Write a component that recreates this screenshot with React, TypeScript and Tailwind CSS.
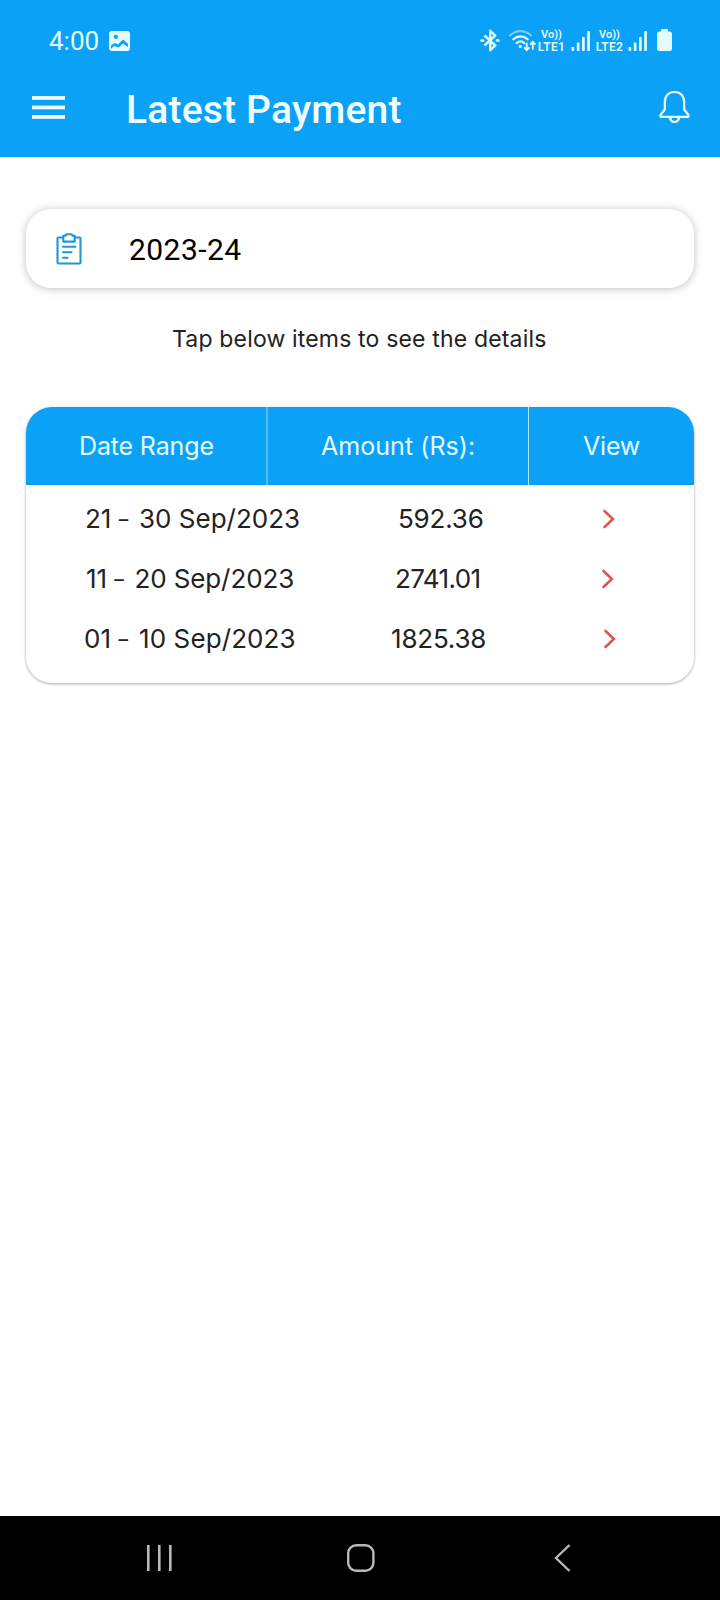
import React from "react";

type Payment = {
  days: [string, string];
  amount: string;
  rangeClass: string;
  amountClass: string;
};

const payments: Payment[] = [
  {
    days: ["21", "30 Sep/2023"],
    amount: "592.36",
    rangeClass: "ml-[59px] w-[313px]",
    amountClass: "w-[204px] tracking-[-0.2px]",
  },
  {
    days: ["11", "20 Sep/2023"],
    amount: "2741.01",
    rangeClass: "ml-[60px] w-[309px] tracking-[-0.1px]",
    amountClass: "w-[206px] tracking-[-0.6px]",
  },
  {
    days: ["01", "10 Sep/2023"],
    amount: "1825.38",
    rangeClass: "ml-[58px] w-[307px] tracking-[0.1px]",
    amountClass: "w-[212px] tracking-[-0.2px]",
  },
];

const SignalBars: React.FC = () => (
  <svg width="20" height="20" viewBox="0 0 20 20" fill="currentColor">
    <rect x="0.5" y="16" width="2.7" height="4" rx="0.8" />
    <rect x="5.8" y="11.5" width="2.7" height="8.5" rx="0.8" />
    <rect x="11" y="6" width="2.7" height="14" rx="0.8" />
    <rect x="16.2" y="0" width="2.7" height="20" rx="0.8" />
  </svg>
);

const LteLabel: React.FC<{ name: string }> = ({ name }) => (
  <div className="flex w-[27px] flex-col items-center font-[Roboto,sans-serif] leading-[12px] font-semibold whitespace-nowrap">
    <span className="text-[11px]">Vo))</span>
    <span className="text-[12px] leading-[13px] tracking-[0.3px]">{name}</span>
  </div>
);

const StatusBar: React.FC = () => (
  <div className="flex h-[60px] items-start text-[#e4fbff]">
    <span className="ml-[49px] mt-[26px] w-[60px] font-[Roboto,sans-serif] text-[26px] leading-[30px]">4:00</span>
    <svg className="mt-[31px]" width="21" height="20" viewBox="0 0 21 20">
      <rect width="21" height="20" rx="3" fill="currentColor" />
      <circle cx="6.8" cy="5.8" r="2.1" fill="#0aa1f6" />
      <path d="M2 14.500l4-2.500 3 1.500 5-5 5 4.500v3l-5-3.500-4.500 4-4-1.500L2 17.500z" fill="#0aa1f6" />
    </svg>
    <svg className="ml-[350px] mt-[29px]" width="20" height="23" viewBox="0 0 20 23" fill="none" stroke="currentColor" strokeWidth="2.4">
      <path d="M4.500 6.500l10.800 10-5 4.700V1.800l5 4.700-10.800 10" strokeLinejoin="round" />
      <path d="M1.400 11.500h1.800M16.800 11.500h1.800" strokeLinecap="round" />
    </svg>
    <svg className="ml-[8px] mt-[29px]" width="29" height="24" viewBox="0 0 29 24" fill="none" stroke="currentColor" strokeWidth="2.200" strokeLinecap="round">
      <path d="M2 6.500C8 0.600 17 0.600 23 6.500" opacity="0.5" />
      <path d="M5.300 10.300c4.200-3.900 10.200-3.900 14.400 0" />
      <path d="M8.700 14.100c2.300-2 5.300-2 7.600 0" />
      <circle cx="12.300" cy="17.500" r="1" fill="currentColor" strokeWidth="1.200" />
      <path d="M18.700 14.500v6.500M16.500 18.800l2.200 2.300 2.200-2.300M24.800 20v-6.500M22.600 15.200l2.200-2.300 2.200 2.300" strokeWidth="1.800" />
    </svg>
    <div className="ml-px mt-[29px]">
      <LteLabel name="LTE1" />
    </div>
    <div className="ml-[6px] mt-[31px]">
      <SignalBars />
    </div>
    <div className="ml-[5px] mt-[29px]">
      <LteLabel name="LTE2" />
    </div>
    <div className="ml-[5px] mt-[31px]">
      <SignalBars />
    </div>
    <svg className="ml-[9px] mt-[29px]" width="15" height="22" viewBox="0 0 15 22" fill="currentColor">
      <rect x="4" width="7" height="5" rx="1.200" />
      <rect y="2.500" width="15" height="19.500" rx="2.500" />
    </svg>
  </div>
);

const Header: React.FC = () => (
  <header className="h-[157px] bg-[#0aa1f6]">
    <StatusBar />
    <div className="flex h-[97px] items-start text-[#f0feff]">
      <button className="ml-[32px] mt-[36px]" aria-label="Menu">
        <svg width="33" height="24" viewBox="0 0 33 24" fill="currentColor">
          <rect y="0.100" width="33" height="3.700" />
          <rect y="9.600" width="33" height="3.700" />
          <rect y="19.100" width="33" height="3.700" />
        </svg>
      </button>
      <h1 className="ml-[61px] mt-[27px] font-[Roboto,sans-serif] text-[39px] leading-[46px] font-medium tracking-[0.2px]">
        Latest Payment
      </h1>
      <button className="mr-[30px] ml-auto mt-[30px]" aria-label="Notifications">
        <svg width="31" height="34" viewBox="0 0 31 34" fill="none" stroke="currentColor" strokeWidth="2.200" strokeLinejoin="round">
          <path d="M15.500 2C9.500 2 5.800 6.200 5.800 12v7.500L1.500 25v1.800h28v-1.800l-4.300-5.500V12c0-5.800-3.700-10-9.700-10z" />
          <path d="M11 27.500c.4 2.900 2 4.500 4.500 4.500s4.100-1.600 4.500-4.500" />
        </svg>
      </button>
    </div>
  </header>
);

const YearSelect: React.FC = () => (
  <div className="mx-[26px] mt-[52px] flex h-[79px] items-center rounded-[25px] bg-white shadow-[0_1px_8px_rgba(0,0,0,0.25)]">
    <svg className="ml-[30px]" width="26" height="32" viewBox="0 0 26 32" fill="none" stroke="#2196d3" strokeWidth="2.1" strokeLinejoin="round">
      <path d="M7 4.500H2.500a1 1 0 0 0-1 1v24a1 1 0 0 0 1 1h21a1 1 0 0 0 1-1v-24a1 1 0 0 0-1-1H19" />
      <path d="M7.300 8.600V2.800h2l1-1.500h5.400l1 1.500h2v5.800z" />
      <path d="M7 13.700h12.500M7 19.200h8.500M7 24.700h4.500" strokeLinecap="round" />
    </svg>
    <span className="ml-[47px] mt-[2px] font-[Roboto,sans-serif] text-[30px] leading-9 tracking-[0.45px] text-black">2023-24</span>
  </div>
);

const PaymentTable: React.FC = () => (
  <section className="mx-[26px] mt-[48px] h-[276px] overflow-hidden rounded-[26px] bg-white shadow-[0_1px_3px_rgba(0,0,0,0.35)]">
    <div className="flex h-[78px] bg-[#0aa1f6] text-[25px] text-[#e6fbff]">
      <div className="flex w-[242px] items-center border-r-2 border-[#55c0f8] pt-[2px] pl-[53px] tracking-[-0.15px]">Date Range</div>
      <div className="flex w-[261px] items-center border-r border-[#b5e6ff] pt-[2px] pl-[53px] tracking-[0.05px]">Amount (Rs):</div>
      <div className="flex flex-1 items-center pt-[2px] pl-[54px] tracking-[-0.2px]">View</div>
    </div>
    <div className="pt-[4px]">
      {payments.map(({ days, amount, rangeClass, amountClass }) => (
        <div key={amount} className="flex h-[60px] items-center text-[26px] whitespace-nowrap text-[#222]">
          <span className={`-mt-[2px] ${rangeClass}`}>
            {days[0]} <span className="inline-block w-[13px] -translate-y-[2px] text-[19px] font-medium">–</span> {days[1]}
          </span>
          <span className={`-mt-[2px] ${amountClass}`}>{amount}</span>
          <svg width="13" height="20" viewBox="0 0 13 20" fill="none" stroke="#d9594f" strokeWidth="2.600">
            <path d="M2.500 2l8.400 8-8.400 8" strokeLinecap="round" />
          </svg>
        </div>
      ))}
    </div>
  </section>
);

const NavBar: React.FC = () => (
  <nav className="mt-auto flex h-[84px] items-center bg-black text-[#b9b9b9]">
    <svg className="ml-[146px]" width="28" height="28" viewBox="0 0 28 28" stroke="currentColor" strokeWidth="2.600">
      <path d="M2.300 1v26M13.300 1v26M24.300 1v26" />
    </svg>
    <svg className="ml-[173px]" width="28" height="28" viewBox="0 0 28 28" fill="none" stroke="currentColor" strokeWidth="2.400">
      <rect x="1.200" y="1.300" width="25.200" height="25.400" rx="8" />
    </svg>
    <svg className="ml-[179px]" width="17" height="28" viewBox="0 0 17 28" fill="none" stroke="currentColor" strokeWidth="2.400">
      <path d="M15.500 1L2 14l13.500 13" />
    </svg>
  </nav>
);

const App: React.FC = () => {
  return (
    <div className="flex h-[1600px] w-[720px] flex-col bg-white font-[Inter,sans-serif]">
      <Header />
      <YearSelect />
      <p className="mt-[36px] ml-[172px] h-[35px] text-[23px] leading-[30px] tracking-[0.17px] whitespace-nowrap text-[#222]">
        Tap below items to see the details
      </p>
      <PaymentTable />
      <NavBar />
    </div>
  );
};

export default App;
